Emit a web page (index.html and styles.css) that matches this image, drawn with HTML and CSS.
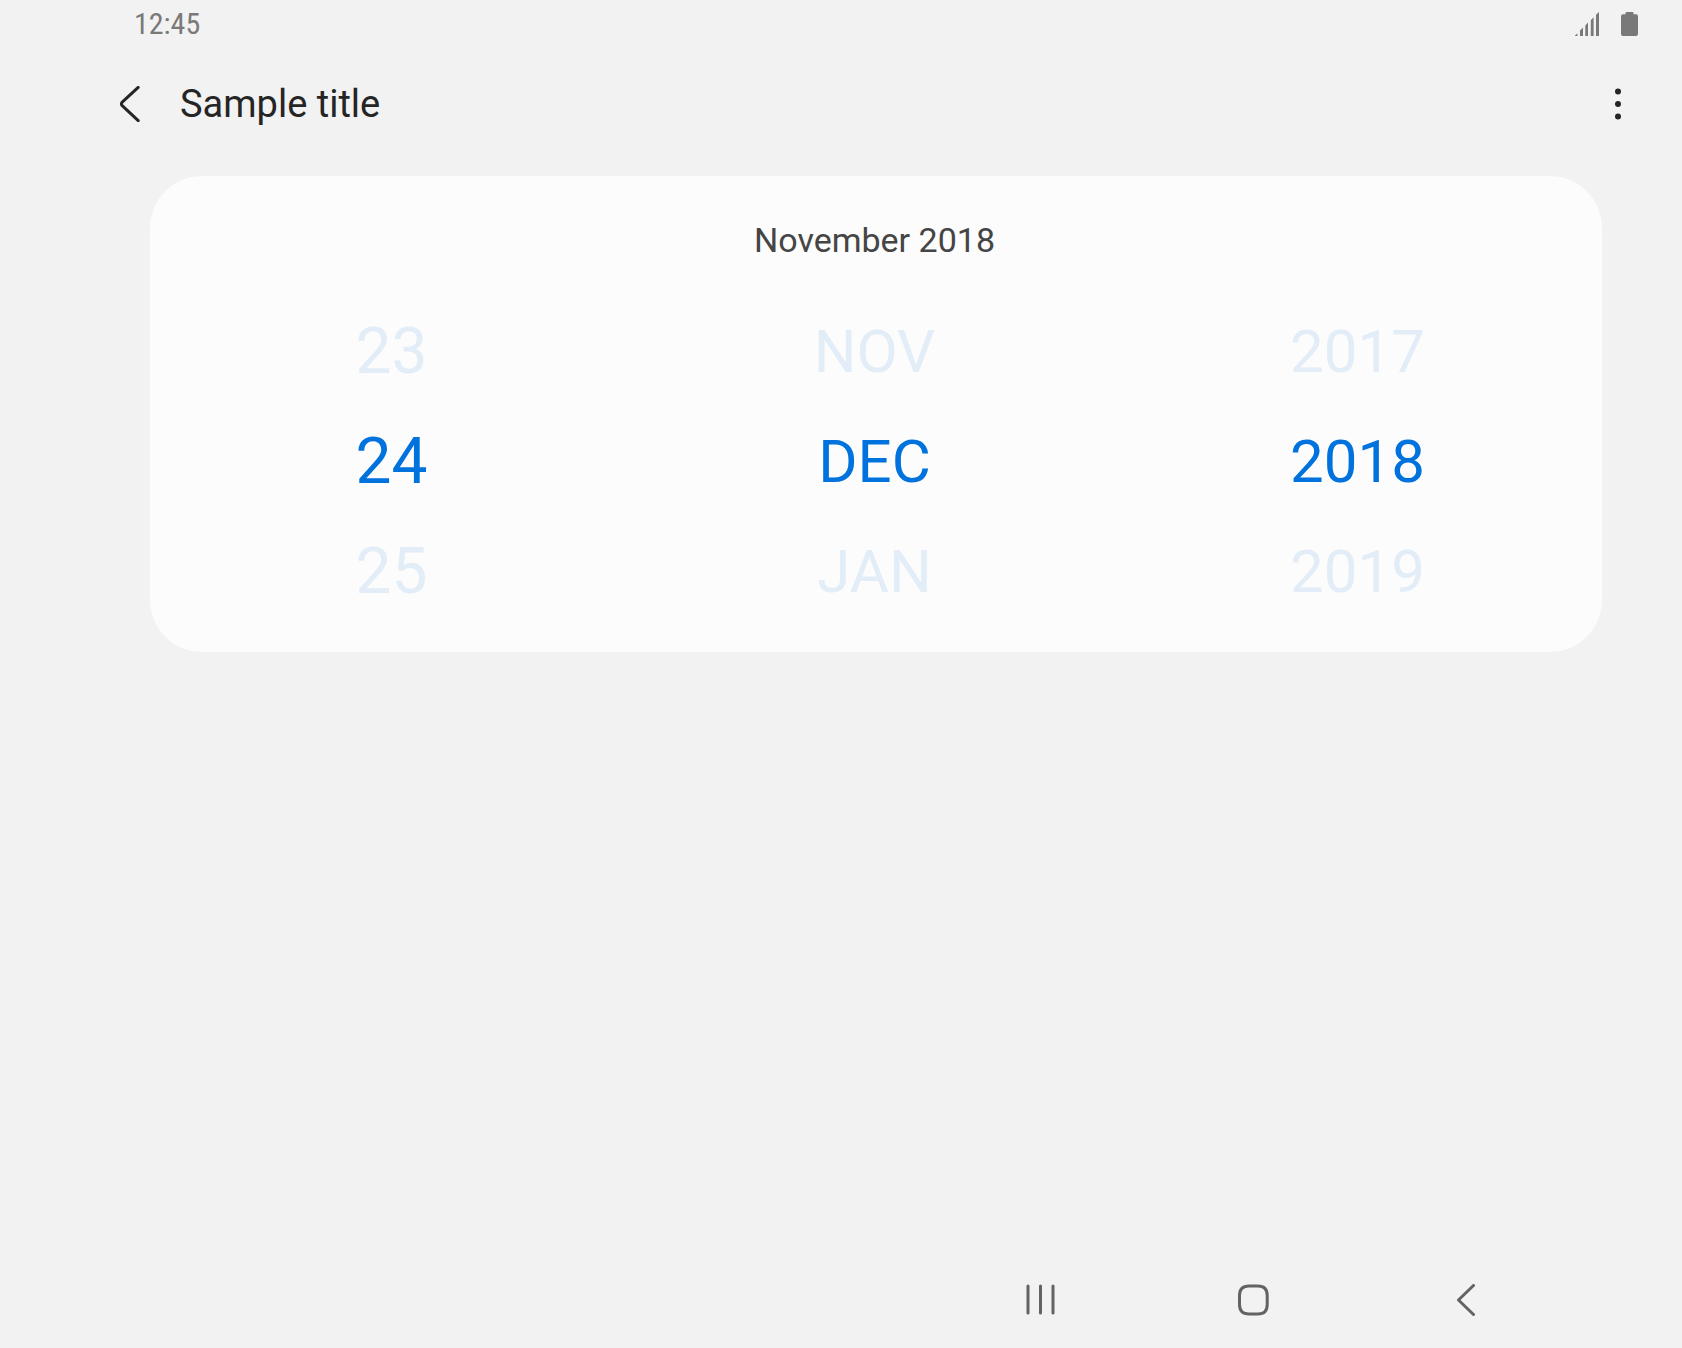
FILE: index.html
```html
<!DOCTYPE html>
<html lang="en">
<head>
<meta charset="utf-8">
<meta name="viewport" content="width=device-width, initial-scale=1">
<title>Sample title</title>
<link rel="stylesheet" href="styles.css">
</head>
<body>
<div class="screen">
  <div class="status-bar">
    <time class="clock">12:45</time>
    <div class="status-icons">
      <svg class="signal" viewBox="0 0 24 24" width="24" height="24" aria-hidden="true">
        <path d="M0 24v-.5L2.5 21.500V24zM5 24v-5.500L8 15.500V24zM10.300 24V13.500L13 10.500V24zM15.800 24V8.300L18.600 5.300V24zM21 24V2.800L24 0V24z"/>
      </svg>
      <svg class="battery" viewBox="0 0 17 24" width="17" height="24" aria-hidden="true">
        <path d="M5.500 0h6q1 0 1 1v1.200H15q2 0 2 2V22q0 2-2 2H2q-2 0-2-2V4.200q0-2 2-2h2.500V1q0-1 1-1z"/>
      </svg>
    </div>
  </div>

  <header class="app-bar">
    <button class="icon-button" type="button" aria-label="Back">
      <svg viewBox="0 0 20 36" width="20" height="36" aria-hidden="true">
        <path class="stroke" d="M18.200 1.400 2.200 16.200Q.6 17.900 2.200 19.600L18.200 34.600"/>
      </svg>
    </button>
    <h1 class="title">Sample title</h1>
    <button class="icon-button" type="button" aria-label="More options">
      <svg viewBox="0 0 8 32" width="8" height="32" aria-hidden="true">
        <circle cx="4" cy="3.500" r="3"/><circle cx="4" cy="16" r="3"/><circle cx="4" cy="28.500" r="3"/>
      </svg>
    </button>
  </header>

  <main class="card">
    <h2 class="month-title">November 2018</h2>
    <div class="picker">
      <div class="wheel wheel-day" role="group" aria-label="Day">
        <button class="value" type="button">23</button>
        <button class="value selected" type="button" aria-pressed="true">24</button>
        <button class="value" type="button">25</button>
      </div>
      <div class="wheel" role="group" aria-label="Month">
        <button class="value" type="button">NOV</button>
        <button class="value selected" type="button" aria-pressed="true">DEC</button>
        <button class="value" type="button">JAN</button>
      </div>
      <div class="wheel" role="group" aria-label="Year">
        <button class="value" type="button">2017</button>
        <button class="value selected" type="button" aria-pressed="true">2018</button>
        <button class="value" type="button">2019</button>
      </div>
    </div>
  </main>

  <nav class="nav-bar" aria-label="System navigation">
    <button class="nav-button" type="button" aria-label="Recent apps">
      <svg viewBox="0 0 33 32" width="33" height="32" aria-hidden="true">
        <path class="stroke" d="M5 2v27M17.500 2v27M30 2v27"/>
      </svg>
    </button>
    <button class="nav-button" type="button" aria-label="Home">
      <svg viewBox="0 0 33 32" width="33" height="32" aria-hidden="true">
        <path class="stroke" d="M13 2H22Q31.200 2 31.200 11.500V20.500Q31.200 30 22 30H13Q3.500 30 3.500 20.500V11.500Q3.500 2 13 2z"/>
      </svg>
    </button>
    <button class="nav-button" type="button" aria-label="Back">
      <svg viewBox="0 0 33 32" width="33" height="32" aria-hidden="true">
        <path class="stroke" d="M24.500 1.500 9.500 16 24.500 30.500"/>
      </svg>
    </button>
  </nav>
</div>
</body>
</html>
```
FILE: styles.css
```css
* {
  box-sizing: border-box;
}

body {
  margin: 0;
  background: #f2f2f2;
  color: #252525;
  font-family: Roboto, "Noto Sans", sans-serif;
}

button {
  display: flex;
  align-items: center;
  justify-content: center;
  margin: 0;
  padding: 0;
  border: 0;
  background: none;
  color: inherit;
  font: inherit;
  cursor: pointer;
}

svg {
  display: block;
  fill: currentColor;
}

.stroke {
  fill: none;
  stroke: currentColor;
  stroke-width: 3;
  stroke-linecap: round;
  stroke-linejoin: round;
}

.screen {
  display: flex;
  flex-direction: column;
  min-height: 100vh;
}

.status-bar {
  display: flex;
  align-items: center;
  justify-content: space-between;
  height: 48px;
  padding: 0 44px 0 134px;
  color: #797979;
}

.clock {
  font-family: "Roboto Condensed", Roboto, sans-serif;
  font-size: 30px;
  line-height: 48px;
}

.status-icons {
  display: flex;
  gap: 22px;
}

.app-bar {
  display: flex;
  align-items: center;
  height: 112px;
  padding: 0 40px 0 106px;
}

.icon-button {
  width: 48px;
  height: 64px;
}

.title {
  flex: 1;
  margin: 0;
  padding-left: 26px;
  font-size: 38px;
  font-weight: 400;
  line-height: 48px;
}

.card {
  margin: 16px 80px 0 150px;
  padding: 44px 3px 26px 0;
  border-radius: 52px;
  background: #fcfcfc;
}

.month-title {
  margin: 0 0 36px;
  color: #454545;
  font-size: 34px;
  font-weight: 400;
  line-height: 40px;
  text-align: center;
}

.picker {
  display: grid;
  grid-template-columns: repeat(3, 1fr);
}

.wheel {
  font-size: 60px;
}

.wheel-day {
  font-size: 64px;
}

.value {
  width: 100%;
  height: 110px;
  color: #e2edf8;
}

.value.selected {
  color: #0072de;
}

.nav-bar {
  display: flex;
  justify-content: flex-end;
  margin-top: auto;
  padding-right: 110px;
  color: #636363;
}

.nav-button {
  width: 213px;
  height: 96px;
}
```
